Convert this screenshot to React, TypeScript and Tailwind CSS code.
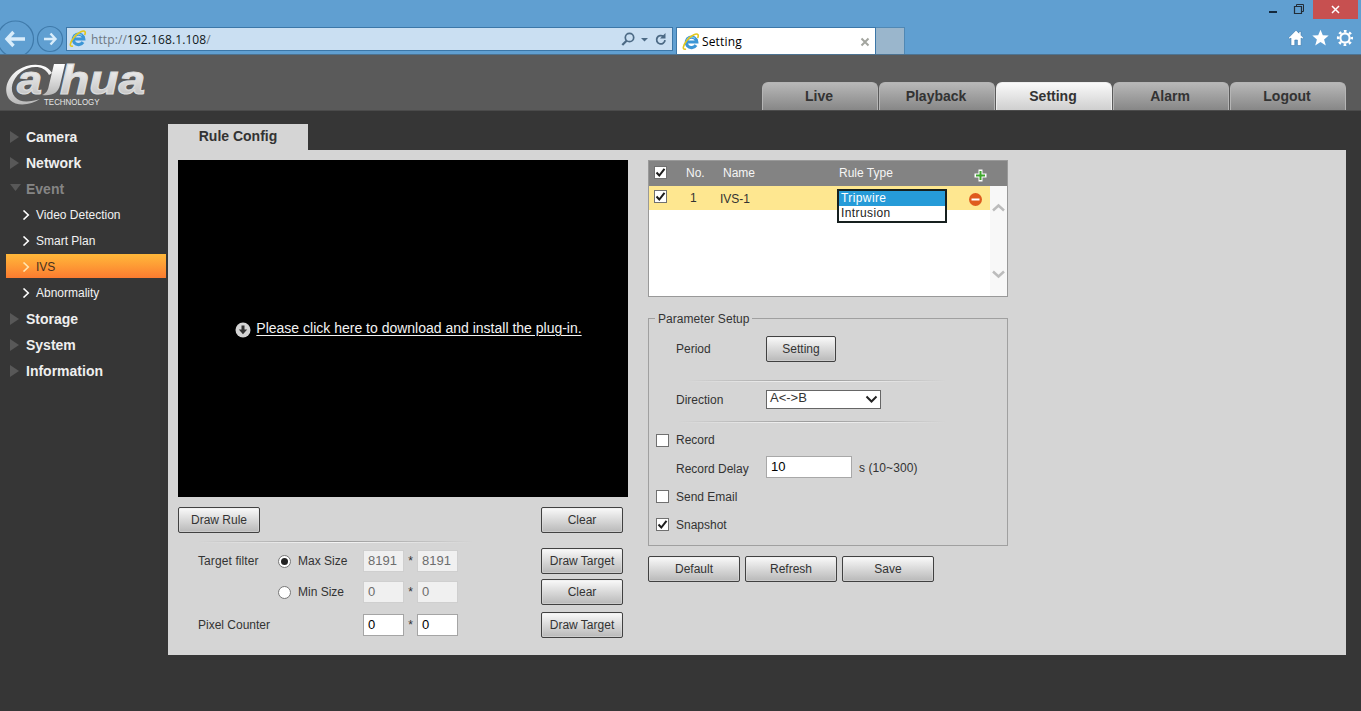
import type { ReactNode } from "react";

function IeLogo() {
  return (
    <svg className="size-[18px] shrink-0" viewBox="0 0 18 18" fill="none">
      <path d="M14 12.200a5.300 5.300 0 1 1 .8-3.200H5.400" stroke="#3c96d6" strokeWidth="3.200" />
      <path d="M4.300 8a5.300 5.300 0 0 1 8.700-2.500" stroke="#7cc4ee" strokeWidth="1.200" />
      <path d="M4 16C-.2 17.400.9 12.300 4.900 7.400 8.900 2.500 14.700-.2 16 1.800c.5.8.2 2-.3 3.200" stroke="#e2c71f" strokeWidth="1.600" />
    </svg>
  );
}

function Chrome() {
  return (
    <header className="flex h-[55px] flex-col overflow-hidden border-b border-[#4d7391] bg-[#609fd1]">
      <div className="flex h-[19px] shrink-0 justify-end pr-[3px]">
        <svg className="h-[19px] w-[44px]" viewBox="0 0 44 19" fill="none">
          <path d="M0 12h8" stroke="#14293d" strokeWidth="2" />
          <path d="M25.500 6.500h7v7h-7z" stroke="#222d38" strokeWidth="1.200" />
          <path d="M27.500 6v-1.500h7v7h-1.500" stroke="#222d38" />
        </svg>
        <div className="flex h-[19px] w-[45px] items-center justify-center bg-[#c75050]">
          <svg className="size-[9px]" viewBox="0 0 9 9">
            <path d="M1 1l7 7M8 1l-7 7" stroke="#fff" strokeWidth="1.500" />
          </svg>
        </div>
      </div>
      <div className="flex h-[36px] shrink-0 items-start">
        <svg className="h-[36px] w-[66px] shrink-0" viewBox="0 0 66 36" fill="none">
          <circle cx="15.500" cy="20" r="18" stroke="#3f7aaa" strokeWidth="1.200" />
          <path d="M13.500 13L7 20l6.500 7M7 20h18" stroke="#d9edfb" strokeWidth="3.400" />
          <circle cx="50" cy="20" r="12.500" stroke="#3f7aaa" strokeWidth="1.200" />
          <path d="M50.500 14.500l5 5.500-5 5.500M55.500 20H44" stroke="#d9edfb" strokeWidth="2.400" />
        </svg>
        <div className="mt-[8px] flex h-[24px] w-[607px] items-center border border-[#3c77a8] bg-[#cadff2] pl-[2px] pr-[4px]">
          <IeLogo />
          <span className="ml-[4px] grow whitespace-nowrap pt-[2px] font-['Open_Sans','Noto_Sans',sans-serif] text-[12px] tracking-[0.100px] text-[#6d7883]">
            http://<span className="text-[#101820]">192.168.1.108</span>/
          </span>
          <svg className="h-[18px] w-[48px]" viewBox="0 0 48 18" fill="none">
            <circle cx="9.500" cy="7.500" r="4.200" stroke="#4c6a85" strokeWidth="1.700" />
            <path d="M6.500 10.700L2.300 15" stroke="#4c6a85" strokeWidth="2.200" />
            <path d="M21 8h7L24.500 11.500z" fill="#4c6a85" />
            <path d="M43.500 6.500A4.200 4.200 0 1 0 45 10.200" stroke="#4c6a85" strokeWidth="1.800" />
            <path d="M45.500 3V8.500H40z" fill="#4c6a85" />
          </svg>
        </div>
        <div className="ml-[3px] mt-[8px] flex h-[28px] w-[200px] items-center border border-b-0 border-[#3c77a8] bg-white pl-[5px] pr-[5px]">
          <IeLogo />
          <span className="ml-[2px] grow font-['Open_Sans','Noto_Sans',sans-serif] text-[12px] tracking-[0.150px] text-black">Setting</span>
          <svg className="size-[10px]" viewBox="0 0 10 10">
            <path d="M1.500 1.500l7 7M8.500 1.500l-7 7" stroke="#a3a59f" strokeWidth="2" />
          </svg>
        </div>
        <div className="mt-[8px] h-[28px] w-[29px] border border-b-0 border-l-0 border-[#5088b4] bg-[#9ab6cc]" />
        <svg className="ml-auto mr-[8px] mt-[10px] h-[18px] w-[65px]" viewBox="0 0 65 18">
          <path d="M8 1.200L.5 8.800l1.300 1.200L3 9v7.500h3.800V11h2.600v5.500h3.700V9l1.200 1 1.200-1.200L13 6.200V2.500h-2v1.700z" fill="#fff" stroke="#3c79ab" strokeWidth=".6" />
          <path d="M32.500.8l2.300 5.500 5.900.3-4.600 3.800 1.700 6.100-5.300-3.500-5.300 3.500 1.700-6.100-4.600-3.800 5.900-.3z" fill="#fff" />
          <circle cx="57" cy="9" r="6.800" fill="none" stroke="#fff" strokeWidth="2.600" strokeDasharray="2.600 2.740" strokeDashoffset="1.300" />
          <circle cx="57" cy="9" r="4.600" fill="none" stroke="#fff" strokeWidth="2.100" />
        </svg>
      </div>
    </header>
  );
}

function Logo() {
  return (
    <svg className="h-[46px] w-[146px]" viewBox="0 0 146 46">
      <defs>
        <linearGradient id="silver" x1="0" y1="0" x2="0" y2="1">
          <stop offset="0" stopColor="#ffffff" />
          <stop offset="1" stopColor="#b9b9b9" />
        </linearGradient>
      </defs>
      <path d="M50 12C45 2 28 1 16 9 4 17 1 31 8 39c7 7 21 5 30-1-10 3-20 4-25-2-6-7-3-18 6-25C29 4 42 4 47 14z" fill="url(#silver)" />
      <g fill="url(#silver)" stroke="#dcdcdc" strokeWidth="1.200" fontFamily="Liberation Sans, sans-serif" fontWeight="700" fontStyle="italic">
        <text x="15" y="33" fontSize="41" textLength="25" lengthAdjust="spacingAndGlyphs">a</text>
        <text x="58" y="33" fontSize="41" textLength="85" lengthAdjust="spacingAndGlyphs">hua</text>
      </g>
      <path d="M52 3h11l-5 21c-2 8-7 11-18 10 5-2 6-5 7-10z" fill="url(#silver)" />
      <text x="42" y="43.500" fontFamily="Liberation Sans, sans-serif" fontSize="9.200" textLength="55.500" lengthAdjust="spacingAndGlyphs" fill="#e6e6e6">TECHNOLOGY</text>
    </svg>
  );
}

function NavTabs() {
  return (
    <nav className="flex gap-[1px] text-[14px] font-bold text-[#333]">
      {["Live", "Playback", "Setting", "Alarm", "Logout"].map((name) => (
        <div
          key={name}
          className={`flex h-[28px] w-[116px] items-center justify-center rounded-t-[6px] border border-b-0 pr-[2px] ${
            name === "Setting"
              ? "border-[#eee] bg-linear-to-b from-[#fafafa] to-[#cfcfcf]"
              : "border-[#b5b5b5] bg-linear-to-b from-[#b8b8b8] to-[#878787]"
          }`}
        >
          {name}
        </div>
      ))}
    </nav>
  );
}

function Section({ name, open = false }: { name: string; open?: boolean }) {
  return (
    <div className={`flex h-[26px] items-center pl-[9px] text-[14px] font-bold ${open ? "text-[#858585]" : "text-[#efefef]"}`}>
      <svg className="mr-[5px] size-[12px]" viewBox="0 0 12 12">
        <path d={open ? "M1 1h11L6.500 8z" : "M1 0l9 6-9 6z"} fill="#585858" />
      </svg>
      {name}
    </div>
  );
}

function Item({ name, active = false }: { name: string; active?: boolean }) {
  return (
    <div className="h-[26px] pl-[6px] pr-[2px]">
      <div className={`flex h-[24px] items-center pl-[16px] pt-[1px] text-[12px] ${active ? "bg-linear-to-b from-[#ffb83a] to-[#fb7b30] text-[#45301f]" : "text-[#f2f2f2]"}`}>
        <svg className="mr-[6px] mt-[1px] h-[10px] w-[8px]" viewBox="0 0 8 10" fill="none">
          <path d="M1.500 .5l4.800 4.500-4.800 4.500" stroke={active ? "#ffe5b0" : "#fff"} strokeWidth="1.600" />
        </svg>
        {name}
      </div>
    </div>
  );
}

function Button({ children, className }: { children: ReactNode; className: string }) {
  return (
    <button className={`flex h-[26px] items-center justify-center whitespace-nowrap rounded-[2px] border border-[#414141] bg-linear-to-b from-[#fafafa] to-[#b9b9b9] text-[12px] text-[#333] shadow-[inset_0_0_0_1px_#e5e5e566] ${className}`}>
      {children}
    </button>
  );
}

function Check({ on = false }: { on?: boolean }) {
  return (
    <span className="flex size-[13px] shrink-0 items-center justify-center border border-[#707070] bg-white">
      {on && (
        <svg className="size-[11px]" viewBox="0 0 11 11" fill="none">
          <path d="M1.500 5.500L4.300 8.500 9.500 1.800" stroke="#1c1c1c" strokeWidth="2" />
        </svg>
      )}
    </span>
  );
}

function Radio({ on = false }: { on?: boolean }) {
  return (
    <span className="flex size-[13px] shrink-0 items-center justify-center rounded-full border border-[#777] bg-white">
      {on && <span className="size-[7px] rounded-full bg-[#222]" />}
    </span>
  );
}

function SizeFields({ value, disabled = false }: { value: string; disabled?: boolean }) {
  const box = `flex h-[22px] w-[41px] items-center border pl-[4px] text-[13px] ${
    disabled ? "border-[#cfcfcf] bg-[#f0f0f0] text-[#6d6d6d]" : "border-[#a5a5a5] bg-white text-black"
  }`;
  return (
    <div className="flex w-[178px] items-center">
      <span className={box}>{value}</span>
      <span className="w-[13px] text-center text-[12px]">*</span>
      <span className={box}>{value}</span>
    </div>
  );
}

function Divider({ className }: { className: string }) {
  return (
    <div className={`h-[2px] ${className}`}>
      <div className="h-px bg-linear-to-r from-transparent via-[#9a9a9a] to-transparent" />
      <div className="h-px bg-linear-to-r from-transparent via-[#f5f5f5] to-transparent" />
    </div>
  );
}

function LeftColumn() {
  return (
    <div className="w-[450px]">
      <div className="flex h-[337px] items-center justify-center bg-black pl-[11px] text-[14px] text-[#f3f3f3]">
        <svg className="mr-[5px] mt-[2px] size-[16px]" viewBox="0 0 16 16">
          <circle cx="8" cy="8" r="7.500" fill="#d4d4d4" />
          <path d="M6.500 3.500h3v4h2.700L8 12.200 3.800 7.500h2.700z" fill="#333" />
        </svg>
        <a className="whitespace-nowrap underline underline-offset-[2px]">Please click here to download and install the plug-in.</a>
      </div>
      <div className="mt-[10px] flex justify-between pr-[5px]">
        <Button className="w-[82px]">Draw Rule</Button>
        <Button className="w-[82px]">Clear</Button>
      </div>
      <Divider className="ml-[20px] mt-[8px] w-[275px]" />
      <div className="mt-[5px] flex h-[26px] items-center pl-[20px]">
        <span className="w-[80px] tracking-[0.100px]">Target filter</span>
        <Radio on />
        <span className="ml-[7px] w-[65px]">Max Size</span>
        <SizeFields value="8191" disabled />
        <Button className="w-[82px]">Draw Target</Button>
      </div>
      <div className="mt-[5px] flex h-[26px] items-center pl-[100px]">
        <Radio />
        <span className="ml-[7px] w-[65px]">Min Size</span>
        <SizeFields value="0" disabled />
        <Button className="w-[82px]">Clear</Button>
      </div>
      <div className="mt-[7px] flex h-[26px] items-center pl-[20px]">
        <span className="w-[165px]">Pixel Counter</span>
        <SizeFields value="0" />
        <Button className="w-[82px]">Draw Target</Button>
      </div>
    </div>
  );
}

function RuleTable() {
  return (
    <div className="h-[137px] border border-[#999] bg-white">
      <div className="flex h-[25px] items-center bg-[#838383] pl-[5px] text-[#f5f5f5]">
        <span className="-mt-[2px]"><Check on /></span>
        <span className="-mt-[2px] ml-[19px] w-[37px]">No.</span>
        <span className="-mt-[2px] w-[115px]">Name</span>
        <span className="-mt-[2px] w-[136px] pl-[1px]">Rule Type</span>
        <svg className="mt-[3px] size-[13px]" viewBox="0 0 13 13">
          <path d="M4.500 .5h4v4h4v4h-4v4h-4v-4h-4v-4h4z" fill="#fff" />
          <path d="M6.500 2v9M2 6.500h9" stroke="#3da52c" strokeWidth="2" />
        </svg>
      </div>
      <div className="flex h-[110px]">
        <div className="relative flex h-[24px] w-[341px] items-center bg-[#fee790] pl-[5px]">
          <span className="-mt-[3px]"><Check on /></span>
          <span className="ml-[23px] w-[30px]">1</span>
          <span className="pt-[1px]">IVS-1</span>
          <svg className="ml-auto mr-[8px] mt-[3px] size-[13px]" viewBox="0 0 13 13">
            <circle cx="6.500" cy="6.500" r="6.500" fill="#df5b1d" />
            <path d="M2.500 6.500h8" stroke="#fff" strokeWidth="2" />
          </svg>
          <div className="absolute left-[188px] top-[3px] h-[34px] w-[110px] border-2 border-[#17201f] bg-white text-[12px] leading-[15px] tracking-[0.400px] text-[#222]">
            <div className="h-[15px] bg-[#269bd8] pl-[2px] leading-[14px] text-white">Tripwire</div>
            <div className="pl-[2px]">Intrusion</div>
          </div>
        </div>
        <div className="flex w-[17px] flex-col justify-between bg-[#f8f8f8] pb-[17px] pt-[17px]">
          <svg className="ml-[2px] h-[9px] w-[13px]" viewBox="0 0 13 9" fill="none"><path d="M1 7.500l5.500-5 5.500 5" stroke="#bcbcbc" strokeWidth="2.500" /></svg>
          <svg className="ml-[2px] h-[9px] w-[13px]" viewBox="0 0 13 9" fill="none"><path d="M1 1.500l5.500 5 5.500-5" stroke="#bcbcbc" strokeWidth="2.500" /></svg>
        </div>
      </div>
    </div>
  );
}

function Parameters() {
  return (
    <fieldset className="mt-[13px] h-[236px] border border-[#a0a0a0] pl-[7px]">
      <legend className="-ml-px h-[17px] px-[3px] leading-[18px] tracking-[0.050px]">Parameter Setup</legend>
      <div className="mt-[9px] flex h-[26px] items-center pl-[20px]">
        <span className="w-[90px]">Period</span>
        <Button className="w-[70px]">Setting</Button>
      </div>
      <Divider className="ml-[30px] mt-[18px] w-[260px]" />
      <div className="mt-[7px] flex h-[20px] items-center pl-[20px]">
        <span className="w-[90px] pt-[1px]">Direction</span>
        <div className="flex h-[19px] w-[115px] items-center justify-between border border-[#666] bg-white pb-[2px] pl-[3px] pr-[2px] text-[13px]">
          A&lt;-&gt;B
          <svg className="mt-[2px] h-[9px] w-[13px]" viewBox="0 0 13 9" fill="none"><path d="M1.500 1.500l5 5 5-5" stroke="#222" strokeWidth="2" /></svg>
        </div>
      </div>
      <Divider className="ml-[22px] mt-[12px] w-[268px]" />
      <div className="mt-[7px] flex h-[20px] items-center"><Check /><span className="ml-[7px]">Record</span></div>
      <div className="mt-[6px] flex h-[22px] items-center pl-[20px]">
        <span className="w-[90px] pt-[3px]">Record Delay</span>
        <span className="flex h-[22px] w-[86px] items-center border border-[#a8a8a8] bg-white pl-[4px] text-[13px] text-black">10</span>
        <span className="ml-[7px] pt-[1px] tracking-[0.080px]">s (10~300)</span>
      </div>
      <div className="mt-[8px] flex h-[20px] items-center"><Check /><span className="ml-[7px] pt-[1px]">Send Email</span></div>
      <div className="mt-[8px] flex h-[20px] items-center"><Check on /><span className="ml-[7px] pt-[1px]">Snapshot</span></div>
    </fieldset>
  );
}

export default function App() {
  return (
    <div className="flex h-[711px] w-[1361px] flex-col overflow-hidden bg-[#363636] font-['Liberation_Sans',Arial,sans-serif] text-[12px] text-[#333]">
      <Chrome />
      <div className="flex h-[56px] shrink-0 items-end justify-between border-b border-[#4b4b4b] bg-[#5a5a5a] pl-[2px] pr-[15px]">
        <div className="mb-[3px]"><Logo /></div>
        <NavTabs />
      </div>
      <div className="flex grow pt-[13px]">
        <aside className="w-[168px] shrink-0">
          <Section name="Camera" />
          <Section name="Network" />
          <Section name="Event" open />
          <Item name="Video Detection" />
          <Item name="Smart Plan" />
          <Item name="IVS" active />
          <Item name="Abnormality" />
          <Section name="Storage" />
          <Section name="System" />
          <Section name="Information" />
        </aside>
        <main className="w-[1178px]">
          <div className="flex h-[26px] w-[140px] items-center justify-center bg-[#d5d5d5] pb-[2px] text-[14px] font-bold">Rule Config</div>
          <div className="flex h-[505px] gap-[20px] bg-[#d5d5d5] pl-[10px] pt-[10px]">
            <LeftColumn />
            <div className="w-[360px]">
              <RuleTable />
              <Parameters />
              <div className="mt-[10px] flex gap-[5px]">
                <Button className="w-[92px]">Default</Button>
                <Button className="w-[92px]">Refresh</Button>
                <Button className="w-[92px]">Save</Button>
              </div>
            </div>
          </div>
        </main>
      </div>
    </div>
  );
}
